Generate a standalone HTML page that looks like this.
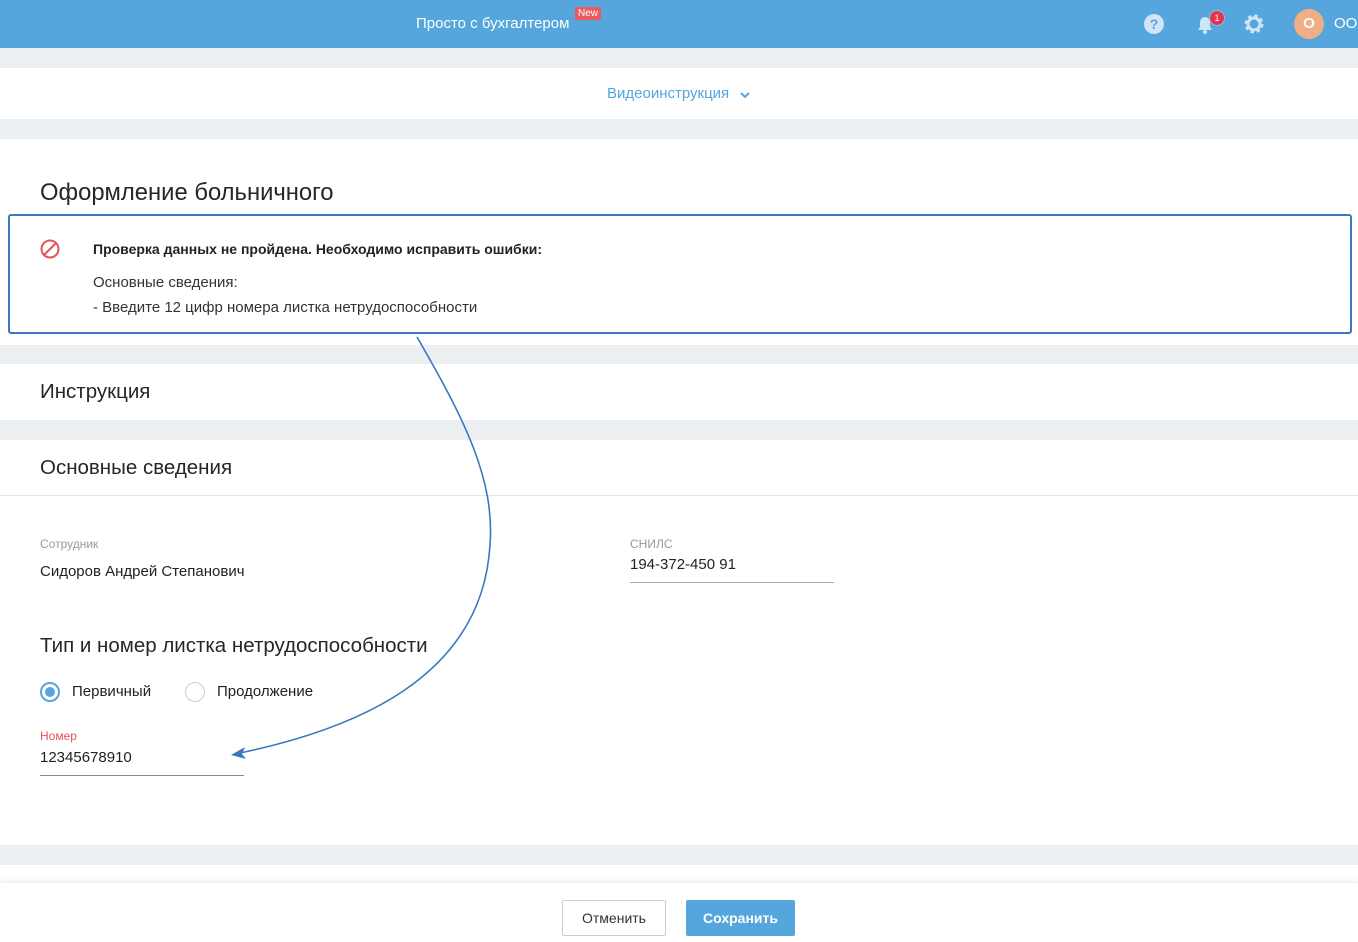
<!DOCTYPE html>
<html><head><meta charset="utf-8"><style>
*{margin:0;padding:0;box-sizing:border-box}
body{width:1358px;height:942px;overflow:hidden;background:#eceff2;font-family:"Liberation Sans","Noto Sans CJK SC",sans-serif;color:#222;position:relative}
.abs{position:absolute}
.w{background:#fff;left:0;width:1358px;position:absolute}
.h{font-size:20.5px;color:#262626}
</style></head><body>
<div class="abs" style="left:0;top:0;width:1358px;height:48px;background:#54a6dc"></div>
<div class="abs" style="left:416px;top:15px;color:#fff;font-size:15px">Просто с бухгалтером</div>
<div class="abs" style="left:575px;top:7px;background:#ea5a5e;color:#fff;font-size:10px;padding:1px 3px;border-radius:2px">New</div>
<svg class="abs" style="left:1143px;top:13px" width="22" height="22"><circle cx="11" cy="11" r="10" fill="#cfe4f5"/><text x="11" y="16" text-anchor="middle" font-size="14" font-weight="bold" fill="#54a6dc" font-family="Liberation Sans">?</text></svg>
<svg class="abs" style="left:1194px;top:13px" width="22" height="22"><path d="M4 17 L18 17 L16 14 L16 9 A5 5 0 0 0 6 9 L6 14 Z" fill="#cfe4f5"/><circle cx="11" cy="19" r="2" fill="#cfe4f5"/></svg>
<div class="abs" style="left:1209px;top:10px;width:16px;height:16px;border-radius:50%;background:#e5334d;border:1px solid #8cc0e8;color:#fff;font-size:9px;text-align:center;line-height:14px">1</div>
<svg class="abs" style="left:1243px;top:13px" width="22" height="22"><circle cx="11" cy="11" r="7" fill="none" stroke="#cfe4f5" stroke-width="5" stroke-dasharray="3 2.5"/><circle cx="11" cy="11" r="6" fill="none" stroke="#cfe4f5" stroke-width="3"/></svg>
<div class="abs" style="left:1294px;top:9px;width:30px;height:30px;border-radius:50%;background:#f0ae86;color:#fff;font-weight:bold;font-size:15px;text-align:center;line-height:30px">О</div>
<div class="abs" style="left:1334px;top:15px;color:#fff;font-size:15px">ООО</div>

<div class="w" style="top:68px;height:51px"></div>
<div class="abs" style="left:607px;top:85px;color:#54a6dc;font-size:15px">Видеоинструкция</div>
<svg class="abs" style="left:739px;top:90px" width="12" height="10"><path d="M2 3 L6 7 L10 3" fill="none" stroke="#54a6dc" stroke-width="2"/></svg>

<div class="w" style="top:139px;height:206px"></div>
<div class="abs" style="left:40px;top:179px;font-size:23.8px;color:#262626">Оформление больничного</div>
<div class="abs" style="left:8px;top:214px;width:1344px;height:120px;border:2px solid #3a78bf;border-radius:3px"></div>
<svg class="abs" style="left:39px;top:238px" width="22" height="22"><circle cx="11" cy="11" r="8.5" fill="none" stroke="#e5535a" stroke-width="2"/><line x1="5" y1="17" x2="17" y2="5" stroke="#e5535a" stroke-width="2"/></svg>
<div class="abs" style="left:93px;top:241px;font-size:14px;font-weight:bold">Проверка данных не пройдена. Необходимо исправить ошибки:</div>
<div class="abs" style="left:93px;top:274px;font-size:15px;color:#333">Основные сведения:</div>
<div class="abs" style="left:93px;top:299px;font-size:15px;color:#333">- Введите 12 цифр номера листка нетрудоспособности</div>

<div class="w" style="top:364px;height:56px"></div>
<div class="abs h" style="left:40px;top:380px">Инструкция</div>

<div class="w" style="top:440px;height:405px"></div>
<div class="abs h" style="left:40px;top:456px">Основные сведения</div>
<div class="abs" style="left:0;top:495px;width:1358px;height:1px;background:#e3e6ea"></div>
<div class="abs" style="left:40px;top:537px;font-size:12px;color:#999">Сотрудник</div>
<div class="abs" style="left:40px;top:563px;font-size:15px">Сидоров Андрей Степанович</div>
<div class="abs" style="left:630px;top:537px;font-size:12px;color:#999">СНИЛС</div>
<div class="abs" style="left:630px;top:556px;font-size:15px">194-372-450 91</div>
<div class="abs" style="left:630px;top:582px;width:204px;height:1px;background:#aaa"></div>
<div class="abs h" style="left:40px;top:634px">Тип и номер листка нетрудоспособности</div>
<div class="abs" style="left:40px;top:682px;width:20px;height:20px;border-radius:50%;border:2px solid #54a6dc"><div style="margin:3px;width:10px;height:10px;border-radius:50%;background:#54a6dc"></div></div>
<div class="abs" style="left:72px;top:683px;font-size:15px">Первичный</div>
<div class="abs" style="left:185px;top:682px;width:20px;height:20px;border-radius:50%;border:1px solid #ccc"></div>
<div class="abs" style="left:217px;top:683px;font-size:15px">Продолжение</div>
<div class="abs" style="left:40px;top:729px;font-size:12px;color:#e5535a">Номер</div>
<div class="abs" style="left:40px;top:749px;font-size:15px">12345678910</div>
<div class="abs" style="left:40px;top:775px;width:204px;height:1px;background:#888"></div>

<div class="w" style="top:865px;height:18px"></div>
<div class="w" style="top:883px;height:59px;box-shadow:0 -2px 4px rgba(0,0,0,.08)"></div>
<div class="abs" style="left:562px;top:900px;width:104px;height:36px;border:1px solid #ccc;border-radius:2px;font-size:14px;text-align:center;line-height:34px;color:#333">Отменить</div>
<div class="abs" style="left:686px;top:900px;width:109px;height:36px;background:#54a6dc;border-radius:2px;font-size:14px;text-align:center;line-height:36px;color:#fff;font-weight:bold">Сохранить</div>

<svg class="abs" style="left:0;top:0" width="1358" height="942"><path d="M417 337 C465 420,495 480,490 545 C482 680,350 730,240 753" fill="none" stroke="#3a78bf" stroke-width="1.6"/><path d="M231 755 L245 747 L242 754 L246 759 Z" fill="#3a78bf"/></svg>
</body></html>
